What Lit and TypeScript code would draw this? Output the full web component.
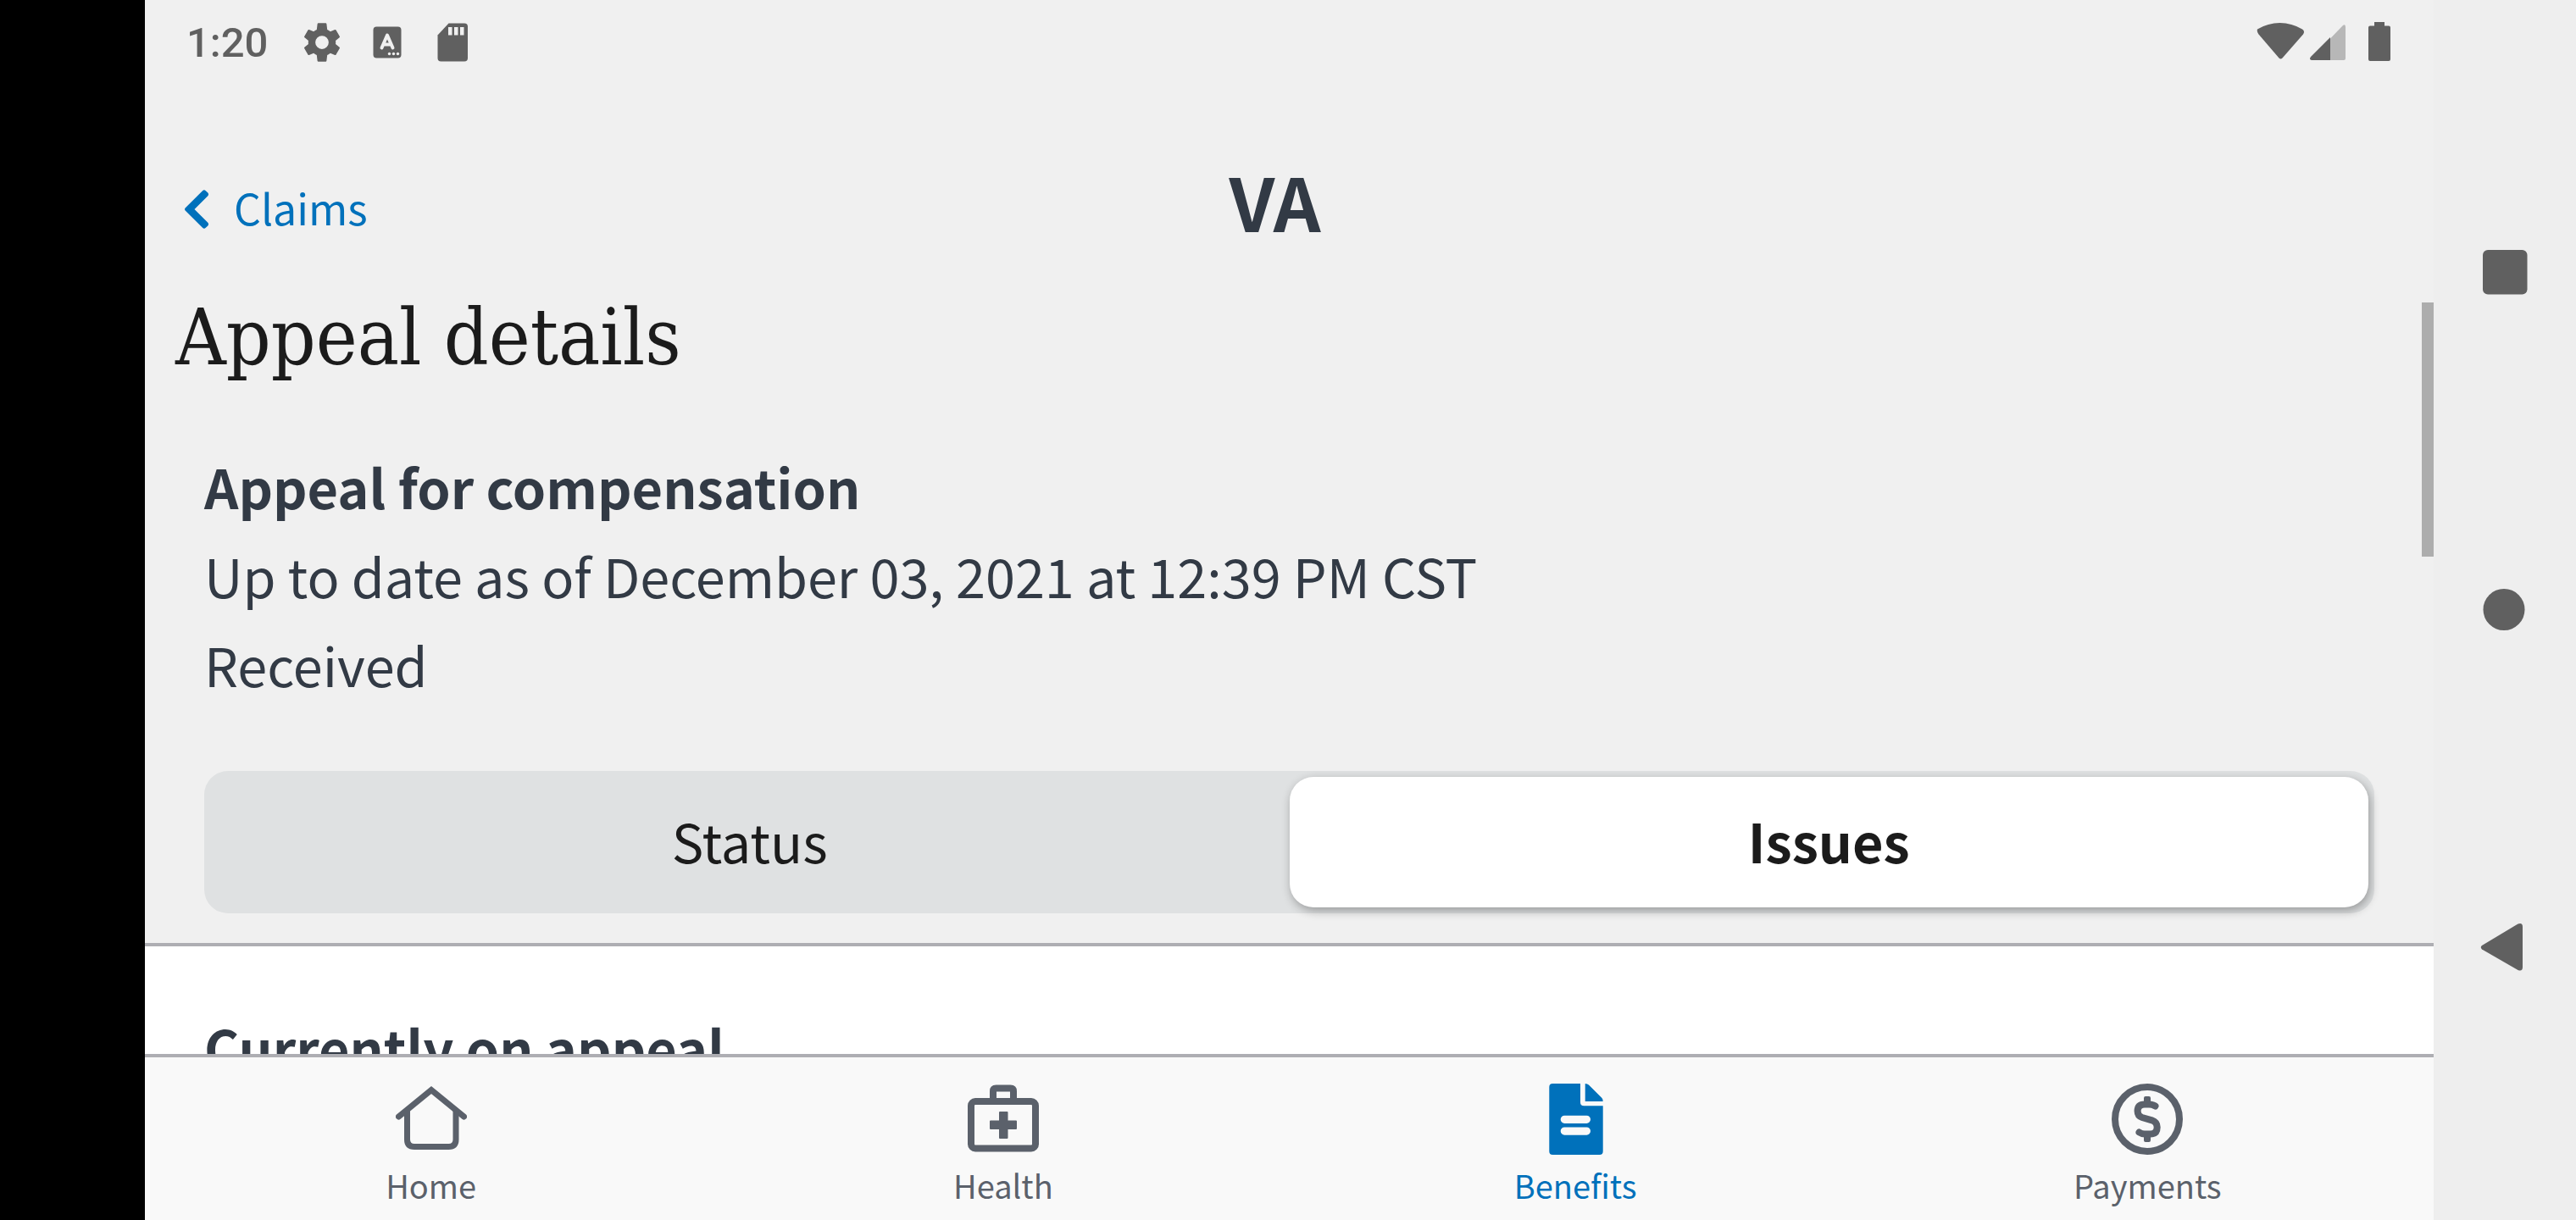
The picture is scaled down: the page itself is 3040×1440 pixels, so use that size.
import { LitElement, html, css, svg } from "lit";
import { customElement, state } from "lit/decorators.js";

const homeIcon = svg`
  <g fill="none" stroke="currentColor" stroke-width="7">
    <path d="M3.5 39 42 7.5 80.5 39" stroke-linecap="round"/>
    <path d="M13.5 32V66q0 8.5 8.5 8.5H62.5q8.5 0 8.5-8.5V32"/>
  </g>`;

const healthIcon = svg`
  <g fill="none" stroke="currentColor" stroke-width="8">
    <rect x="4" y="21" width="76" height="55.5" rx="5"/>
    <path d="M30 20V9q0-3.5 3.5-3.5H50.5q3.5 0 3.5 3.5V20"/>
  </g>
  <path fill="currentColor" d="M38 33h8.5q1 0 1 1v9.5H57q1 0 1 1V53q0 1-1 1h-9.5v10q0 1-1 1H38q-1 0-1-1V54H27q-1 0-1-1v-8.5q0-1 1-1h10V34q0-1 1-1z"/>`;

const benefitsIcon = svg`
  <path fill="currentColor" fill-rule="evenodd" d="M15.3 0H48v22q0 4.3 4.3 4.3H74.7V80q0 4-4 4H15.3q-4 0-4-4V4q0-4 4-4zM29.3 37.7a4.6 4.6 0 0 0 0 9.2H55.4a4.6 4.6 0 0 0 0-9.2zM29.3 51.5a4.6 4.6 0 0 0 0 9.2H55.4a4.6 4.6 0 0 0 0-9.2z"/>
  <path fill="currentColor" d="M53.7 0q2.6 0 4.2 1.6L73.2 16.8q1.5 1.6 1.5 4.2H53.7z"/>`;

const paymentsIcon = svg`
  <g fill="none" stroke="currentColor" stroke-width="8">
    <circle cx="42" cy="42" r="38"/>
    <path d="M51.5 26.5Q48 24.5 44 24.5H39Q30.6 24.5 30.6 32.5 30.6 38.2 36 40L47.5 43.3Q53.7 45.5 53.7 51.5 53.7 59.5 46 59.5H39Q35.5 59.5 32.5 57.5" stroke-linecap="round"/>
  </g>
  <path fill="currentColor" d="M40 15h4q2 0 2 2v6h-8v-6q0-2 2-2zM38 61h8v6q0 2-2 2h-4q-2 0-2-2z"/>`;

const tabs = [
  { label: "Home", icon: homeIcon },
  { label: "Health", icon: healthIcon },
  { label: "Benefits", icon: benefitsIcon },
  { label: "Payments", icon: paymentsIcon },
];

@customElement("app-root")
export class AppRoot extends LitElement {
  @state() private segment = "Issues";
  @state() private tab = "Benefits";

  static styles = css`
    :host {
      display: grid;
      grid-template-columns: 171px minmax(0, 1fr) 168px;
      height: 100vh;
      background: #000;
      color: #323a45;
      font-family: "Noto Sans CJK JP", "Noto Sans", sans-serif;
    }
    * {
      box-sizing: border-box;
    }
    svg {
      display: block;
    }
    button {
      margin: 0;
      padding: 0;
      border: 0;
      background: none;
      color: inherit;
      font: inherit;
      cursor: pointer;
    }
    h1,
    h2,
    p {
      margin: 0;
    }
    .screen {
      grid-column: 2;
      position: relative;
      display: flex;
      flex-direction: column;
      min-height: 0;
      background: #f0f0f0;
    }
    .status {
      display: flex;
      justify-content: space-between;
      align-items: center;
      height: 100px;
      padding: 0 49px;
      color: #606060;
    }
    .status-left {
      display: flex;
      align-items: center;
      gap: 23px;
    }
    .time {
      margin-right: 14px;
      padding-top: 2px;
      font: 500 49px/64px Roboto, sans-serif;
    }
    .header {
      display: grid;
      grid-template-columns: 1fr auto 1fr;
      align-items: center;
      height: 244px;
      padding: 44px 81px 0 47px;
      flex: none;
    }
    .back {
      justify-self: start;
      display: flex;
      align-items: center;
      gap: 30px;
      color: #0071bb;
      font-size: 50px;
      line-height: 70px;
      text-decoration: none;
    }
    .back svg {
      margin-top: 6px;
    }
    .logo {
      padding-bottom: 16px;
      font-size: 87px;
      line-height: 120px;
      font-weight: 700;
    }
    .scroll {
      flex: 1;
      min-height: 0;
      overflow: hidden;
    }
    h1 {
      padding-left: 36px;
      color: #1b1b1b;
      font: 400 92px/110px "DejaVu Serif Condensed", "DejaVu Serif", serif;
    }
    .summary {
      padding: 67px 70px 35px;
      font-size: 63px;
      line-height: 105px;
    }
    h2 {
      font-size: 63px;
      line-height: 105px;
      font-weight: 700;
    }
    .segments {
      display: grid;
      grid-template-columns: 1fr 1fr;
      margin-top: 74px;
      padding: 7px;
      border-radius: 28px;
      background: #dfe1e2;
    }
    .segment {
      height: 154px;
      padding-bottom: 6px;
      border-radius: 28px;
      color: #1b1b1b;
    }
    .segment.on {
      background: #fff;
      font-weight: 700;
      box-shadow: 2px 4px 12px rgba(0, 0, 0, 0.32);
    }
    .panel {
      padding: 66px 70px;
      border-top: 4px solid #aeaeb3;
      background: #fff;
    }
    .thumb {
      position: absolute;
      top: 357px;
      right: 0;
      width: 14px;
      height: 300px;
      background: #adadad;
    }
    .tabs {
      display: grid;
      grid-template-columns: repeat(4, 1fr);
      flex: none;
      height: 196px;
      border-top: 4px solid #aeaeb3;
      background: #f9f9f9;
    }
    .tab {
      display: flex;
      flex-direction: column;
      align-items: center;
      gap: 10px;
      padding-top: 31px;
      color: #5b616b;
      font-size: 38px;
      line-height: 52px;
    }
    .tab.on {
      color: #0071bb;
    }
    .system {
      grid-column: 3;
      display: flex;
      flex-direction: column;
      justify-content: center;
      align-items: center;
      gap: 315px;
      background: #eee;
      color: #606060;
    }
  `;

  render() {
    return html`
      <main class="screen">
        <div class="status">
          <div class="status-left">
            <span class="time">1:20</span>
            <svg width="54" height="54" viewBox="0 0 24 24" fill="currentColor" aria-hidden="true">
              <path d="M19.14 12.94c.04-.3.06-.61.06-.94 0-.32-.02-.64-.07-.94l2.03-1.58c.18-.14.23-.41.12-.61l-1.92-3.32c-.12-.22-.37-.29-.59-.22l-2.39.96c-.5-.38-1.03-.7-1.62-.94L14.4 2.31c-.04-.24-.24-.41-.48-.41h-3.84c-.24 0-.43.17-.47.41L9.25 5.35c-.59.24-1.13.57-1.62.94l-2.39-.96c-.22-.08-.47 0-.59.22L2.74 8.87c-.12.21-.08.47.12.61l2.03 1.58c-.05.3-.09.63-.09.94s.02.64.07.94l-2.03 1.58c-.18.14-.23.41-.12.61l1.92 3.32c.12.22.37.29.59.22l2.39-.96c.5.38 1.03.7 1.62.94l.36 3.04c.05.24.24.41.48.41h3.84c.24 0 .44-.17.47-.41l.36-3.04c.59-.24 1.13-.56 1.62-.94l2.39.96c.22.08.47 0 .59-.22l1.92-3.32c.12-.22.07-.47-.12-.61zM12 15.5a3.5 3.5 0 1 1 0-7 3.5 3.5 0 0 1 0 7z"/>
            </svg>
            <svg width="54" height="54" viewBox="0 0 54 54" aria-hidden="true">
              <rect x="10.5" y="8.5" width="33" height="37" rx="4" fill="currentColor"/>
              <path d="M20.5 33.5 27 18.5 33.5 33.5M23 29.5H31" fill="none" stroke="#f0f0f0" stroke-width="4" stroke-linecap="round" stroke-linejoin="round"/>
              <g fill="#f0f0f0">
                <circle cx="29.5" cy="40.5" r="1.7"/>
                <circle cx="34.5" cy="40.5" r="1.7"/>
                <circle cx="39.5" cy="40.5" r="1.7"/>
              </g>
            </svg>
            <svg width="54" height="54" viewBox="0 0 54 54" aria-hidden="true">
              <path fill="currentColor" d="M22.5 4.5H41q4 0 4 4v37q0 4-4 4H13.5q-4 0-4-4V18.5z"/>
              <path fill="#f0f0f0" d="M22 9h4.5v9.5H22zM29 9h4.5v9.5H29zM36 9h4.5v9.5H36z"/>
            </svg>
          </div>
          <svg width="162" height="54" viewBox="0 0 162 54" aria-hidden="true">
            <path fill="currentColor" d="M3 11.5Q15.5 4 29.5 4T56 11.5Q59.5 14 57 17.5L32.5 45.5Q30.5 47.5 28.5 45.5L4.5 17.5Q2 14 3 11.5z"/>
            <path fill="#b7b7b7" d="M89 22.5 103.5 7.5Q107 4.5 107 9V46q0 2-2 2H89z"/>
            <path fill="currentColor" d="M89 21V48H67q-3.5-1-1-4z"/>
            <path fill="currentColor" d="M141 3h12v4.5h5q2 0 2 2V47q0 2-2 2h-22q-2 0-2-2V9.5q0-2 2-2h5z"/>
          </svg>
        </div>

        <header class="header">
          <a class="back" href="#claims">
            <svg width="28" height="46" viewBox="0 0 28 46" aria-hidden="true">
              <path fill="currentColor" d="M.6 21.5 21 1.2q2-1.7 3.8 0l2.5 2.4q1.5 1.7 0 3.6L11.5 23 27.3 38.8q1.5 1.9 0 3.6l-2.5 2.4q-1.8 1.7-3.8 0L.6 24.5q-1.2-1.5 0-3z"/>
            </svg>
            Claims
          </a>
          <span class="logo">VA</span>
        </header>

        <div class="scroll">
          <h1>Appeal details</h1>
          <section class="summary">
            <h2>Appeal for compensation</h2>
            <p>Up to date as of December 03, 2021 at 12:39 PM CST</p>
            <p>Received</p>
            <div class="segments" role="tablist">
              ${["Status", "Issues"].map(
                (name) => html`<button
                  class="segment ${this.segment === name ? "on" : ""}"
                  role="tab"
                  aria-selected=${this.segment === name}
                  @click=${() => (this.segment = name)}
                >${name}</button>`
              )}
            </div>
          </section>
          <section class="panel">
            <h2>Currently on appeal</h2>
          </section>
        </div>
        <div class="thumb"></div>

        <nav class="tabs">
          ${tabs.map(
            ({ label, icon }) => html`<button
              class="tab ${this.tab === label ? "on" : ""}"
              @click=${() => (this.tab = label)}
            >
              <svg width="84" height="84" viewBox="0 0 84 84" aria-hidden="true">${icon}</svg>
              <span>${label}</span>
            </button>`
          )}
        </nav>
      </main>

      <aside class="system">
        <button aria-label="Recent apps">
          <svg width="84" height="84" viewBox="0 0 84 84"><rect x="16" y="16" width="52.5" height="52.5" rx="6" fill="currentColor"/></svg>
        </button>
        <button aria-label="Home screen">
          <svg width="84" height="84" viewBox="0 0 84 84"><circle cx="41" cy="41.5" r="24.5" fill="currentColor"/></svg>
        </button>
        <button aria-label="Back">
          <svg width="84" height="84" viewBox="0 0 84 84"><path fill="currentColor" d="M15 39 57.5 13.5Q63 11.5 63 17V64.5Q63 70 57.5 68L15 43.5Q12.5 41.2 15 39z"/></svg>
        </button>
      </aside>
    `;
  }
}
